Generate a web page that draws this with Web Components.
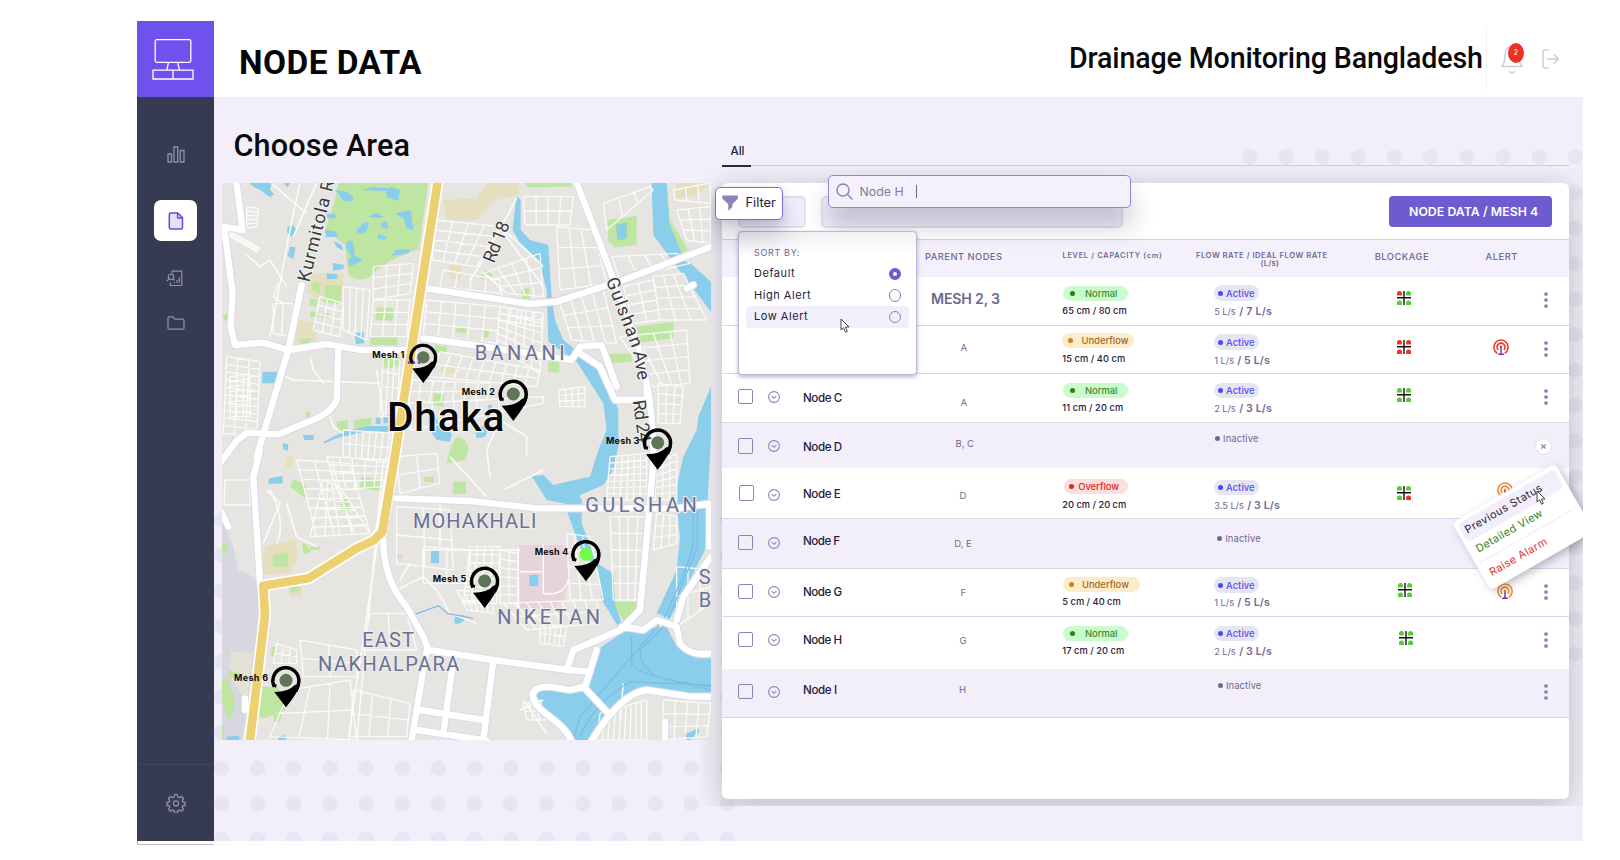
<!DOCTYPE html>
<html lang="en">
<head>
<meta charset="utf-8">
<title>Drainage Monitoring Bangladesh</title>
<style>
  html, body { margin: 0; padding: 0; background: #fff; }
  body { width: 1620px; height: 860px; overflow: hidden; font-family: Inter, "Liberation Sans", sans-serif; color: #25213b; }
</style>
</head>
<body>
<app-shell>
  <side-nav slot="nav"></side-nav>
  <top-bar slot="header" heading="NODE DATA" product="Drainage Monitoring Bangladesh"></top-bar>
  <area-map slot="map"></area-map>
  <node-panel slot="panel"></node-panel>
</app-shell>

<script>
const ctx = document.createElement('canvas').getContext('2d');

function define(name, render) {
  customElements.define(name, class extends HTMLElement {
    constructor() { super(); this.attachShadow({ mode: 'open' }); }
    connectedCallback() { this.shadowRoot.innerHTML = render(this); }
  });
}

/* One line of text tracked out to a given width. */
customElements.define('fit-text', class extends HTMLElement {
  constructor() {
    super();
    this.attachShadow({ mode: 'open' }).innerHTML =
      '<style>:host{display:block;white-space:pre}</style><slot></slot>';
  }
  connectedCallback() {
    const size = +this.getAttribute('s'), weight = this.getAttribute('wt') || 400;
    const family = this.getAttribute('f') || 'Inter', width = +this.getAttribute('w');
    const text = this.textContent;
    ctx.font = `${weight} ${size}px ${family}, "Liberation Sans"`;
    const natural = ctx.measureText(text).width;
    const st = this.style;
    st.fontFamily = `${family}, "Liberation Sans", sans-serif`;
    st.fontSize = size + 'px';
    st.fontWeight = weight;
    st.lineHeight = (this.getAttribute('h') || 14) + 'px';
    if (this.getAttribute('c')) st.color = this.getAttribute('c');
    if (width && text.length > 1) {
      st.letterSpacing = ((width + size * 0.1 - natural) / (text.length - 1)).toFixed(3) + 'px';
      st.width = Math.ceil(width + 4) + 'px';
    }
  }
});
const T = (text, s, w, c, wt = 400, h = 14, f = 'Inter') =>
  `<fit-text s="${s}" w="${w}" c="${c}" wt="${wt}" h="${h}" f="${f}">${text}</fit-text>`;

define('app-shell', () => `
<style>
  :host{display:grid;grid-template-columns:77px 1369px;grid-template-rows:76px 744px;padding:21px 0 0 137px;width:1446px;height:830px}
  .nav{grid-row:1 / 3}
  main{position:relative;background:#f2effa;display:grid;grid-template-columns:489px 847px;column-gap:11px;padding-left:8px;align-items:start;overflow:hidden}
  .dots{position:absolute;inset:0;width:1369px;height:744px}
  .map{position:relative;z-index:1}
  h2{margin:0;padding:32px 0 0 11.5px;height:54px;font-weight:500}
  .foot{grid-column:1 / 3;height:3px;border-bottom:1px solid #fafafd}
  .foot i{display:block;width:76px;height:3px;border-bottom:1px solid #b9bac6;border-left:1px solid #b9bac6;box-sizing:content-box}
</style>
<div class="nav"><slot name="nav"></slot></div>
<slot name="header"></slot>
<main>
  <svg class="dots" viewBox="214 97.3 1369 744">
    <defs><pattern id="d" patternUnits="userSpaceOnUse" x="203.4" y="502.3" width="36.15" height="35.5"><circle cx="18.07" cy="17.75" r="7.7" fill="#e7e4f4"/></pattern>
    <pattern id="e" patternUnits="userSpaceOnUse" x="1231.9" y="139.6" width="36.15" height="35.5"><circle cx="18.07" cy="17.75" r="7.7" fill="#e7e4f4"/></pattern></defs>
    <rect x="203.4" y="502.3" width="542.3" height="355" fill="url(#d)"/>
    <rect x="1231.9" y="139.6" width="361.5" height="532.5" fill="url(#e)"/>
  </svg>
  <div class="map"><h2>${T('Choose Area', 30.6, 173.5, '#0a0a0a', 500, 34, 'Roboto')}</h2><slot name="map"></slot></div>
  <slot name="panel"></slot>
</main>
<div class="foot"><i></i></div>`);

define('side-nav', () => `
<style>
  :host{display:flex;flex-direction:column;width:77px;height:820px;background:#373a53}
  .logo{height:76px;background:#6f52ed;display:flex;justify-content:center;padding-top:16.5px;box-sizing:border-box}
  nav{flex:1;display:flex;flex-direction:column;align-items:center}
  a{display:grid;place-items:center;width:43px;height:41px;border-radius:7px}
  a.on{background:#fff}
  .end{height:76px;border-top:1.5px solid #42455f;display:grid;place-items:center}
  svg{fill:none;display:block}
</style>
<div class="logo"><svg width="42" height="43" viewBox="0 0 42 43" stroke="#fff" stroke-width="1.3" style="margin-right:5px"><rect x="3.2" y="1.7" width="35.6" height="22.6" rx="1.5"/><path d="M16.5 24.3 14.8 32M25.5 24.3 27.5 32M1 32.2H41V41H1ZM21 32.2V41"/></svg></div>
<nav>
  <a style="margin-top:37px"><svg width="18" height="17" viewBox="0 0 18 17" stroke="#8e8fb5" stroke-width="1.3"><path d="M1 8h3.5v8H1ZM7 1h3.7v15H7ZM13.3 4.5H17V16h-3.7Z"/></svg></a>
  <a class="on" style="margin-top:25px"><svg width="16" height="18" viewBox="0 0 16 18" stroke="#7443e0" stroke-width="1.5" stroke-linejoin="round"><path fill="#e6e3f4" d="M2.8 1H9.8L14.5 5.8V15.5Q14.5 17 13 17H2.8Q1.3 17 1.3 15.5V2.5Q1.3 1 2.8 1Z"/><path d="M9.6 1V6H14.5"/></svg></a>
  <a style="margin-top:16.500px"><svg width="17" height="17" viewBox="0 0 17 17" stroke="#8e8fb5" stroke-width="1.2" style="margin-right:3px"><path d="M6 3V1.2H15.800V15.500H4.400V12.500M11 12.800V10M13.300 12.800V7.500M8.500 12.800V11.800"/><circle cx="5" cy="6.8" r="2.7"/><path d="M3 8.8 .8 11.2M7 9.5 9 10"/></svg></a>
  <a style="margin-top:4px"><svg width="18" height="14" viewBox="0 0 18 14" stroke="#8e8fb5" stroke-width="1.3" stroke-linejoin="round"><path d="M1 2Q1 .8 2.2 .8H6L7.8 3.2H15.8Q17 3.2 17 4.4V12Q17 13.2 15.8 13.2H2.2Q1 13.2 1 12Z"/></svg></a>
</nav>
<div class="end"><svg width="20" height="20" viewBox="0 0 24 24" stroke="#8e8fb5" stroke-width="1.6" stroke-linejoin="round"><circle cx="12" cy="12.500" r="3"/><path d="M10.3 2h3.4l.6 2.9 1.8.8 2.5-1.600 2.400 2.400L19.400 9l.8 1.800 2.800.600v3.300l-2.800.600-.800 1.800 1.600 2.500-2.400 2.400-2.500-1.600-1.800.800-.600 2.800h-3.400l-.600-2.800-1.800-.800-2.500 1.600L3 19.600l1.600-2.500-.800-1.800L1 14.700v-3.300l2.800-.600L4.600 9 3 6.500l2.400-2.400 2.500 1.600 1.800-.8Z"/></svg></div>`);

define('top-bar', el => `
<style>
  :host{display:flex;align-items:flex-start;height:76px;background:#fff}
  h1,p{margin:0}
  h1{padding:23px 0 0 25px;flex:0 0 190px}
  p{margin:17.500px 0 0 auto;width:417px}
  .rule{width:1px;height:62px;margin:6px 0 0 0;background:#f0f0f2}
  .bell{position:relative;margin:23.500px 0 0 14px;width:22px;height:29px}
  .badge{position:absolute;left:7px;top:-1.500px;width:16px;height:20px;border-radius:50%;background:#ee3024;color:#fff;text-align:center;font-size:7px;line-height:19px}
  .exit{margin:27.500px 24px 0 19px}
  svg{display:block;fill:none}
</style>
<h1>${T(el.getAttribute('heading'), 33.4, 179, '#060606', 700, 38, 'Roboto')}</h1>
<p>${T(el.getAttribute('product'), 28.6, 411, '#0a0a0a', 500, 38, 'Roboto')}</p>
<div class="rule"></div>
<div class="bell"><svg width="22" height="29" viewBox="0 0 22 29" stroke="#ced0d9" stroke-width="1.5" stroke-linecap="round" stroke-linejoin="round"><path d="M1 21.500H21C18 18 18.500 15 18 10C17.500 4 14.500 1.500 11 1.500S4.500 4 4 10C3.600 15 4 18 1 21.500ZM8.600 26.500q2.400 2.600 4.800 0"/></svg><span class="badge">2</span></div>
<div class="exit"><svg width="17" height="20" viewBox="0 0 17 20" stroke="#ced0d9" stroke-width="1.5" stroke-linecap="round" stroke-linejoin="round"><path d="M6 1H2.500Q1 1 1 2.500V17.500Q1 19 2.500 19H6M5.500 10H16M12 5.500 16.300 10 12 14.500"/></svg></div>`);

/* Street grid: straight lines interpolated between the four corners of a block. */
function grid(ax, ay, bx, by, cx, cy, dx, dy, n, m) {
  let d = '';
  for (let i = 0; i <= n; i++) { const t = i / n;
    d += `M${(ax + (bx - ax) * t).toFixed(0)} ${(ay + (by - ay) * t).toFixed(0)}L${(dx + (cx - dx) * t).toFixed(0)} ${(dy + (cy - dy) * t).toFixed(0)}`; }
  for (let i = 0; i <= m; i++) { const t = i / m;
    d += `M${(ax + (dx - ax) * t).toFixed(0)} ${(ay + (dy - ay) * t).toFixed(0)}L${(bx + (cx - bx) * t).toFixed(0)} ${(by + (cy - by) * t).toFixed(0)}`; }
  return d;
}
const streets = [
  [940,80,1090,80,1080,165,945,165,4,2],[1180,100,1320,50,1330,60,1190,180,3,1],
  [1040,170,1150,180,1190,340,1050,360,3,3],[1205,260,1400,250,1440,280,1230,330,4,1],
  [1390,60,1500,39,1503,100,1395,90,3,1],[1400,120,1503,110,1503,220,1430,210,3,3],
  [1330,320,1420,310,1490,450,1350,450,3,4],[1240,350,1330,330,1350,450,1270,460,2,4],
  [1050,400,1180,360,1220,520,1085,510,4,3],[1230,500,1430,480,1440,640,1330,650,4,4],
  [650,390,870,410,860,520,640,495,5,3],[870,410,1000,430,990,610,860,530,5,6],
  [870,410,1000,430,995,470,866,450,4,2],
  [690,545,990,600,980,650,660,620,9,2],[600,630,840,640,830,690,590,700,7,2],
  [680,150,870,170,800,290,665,270,4,4],[820,310,990,250,1000,380,890,370,4,3],
  [700,300,870,330,870,370,690,350,4,1],
  [490,290,610,280,600,370,490,390,3,3],[400,350,480,360,470,510,400,480,4,1],
  [490,390,600,390,590,500,480,500,3,3],[330,380,400,400,390,500,310,480,3,4],
  [190,400,250,400,240,500,190,490,2,1],
  [110,110,145,115,140,170,110,175,1,5],[55,180,150,235,140,245,60,200,2,3],
  [50,560,150,575,140,800,40,790,3,10],[60,620,120,610,120,740,60,740,3,8],
  [400,780,560,790,545,880,400,860,8,2],[520,560,570,570,560,740,510,740,3,4],
  [1045,660,1125,650,1125,710,1050,710,4,3],[600,700,1000,680,1000,700,600,780,6,1],
  [1200,860,1310,850,1310,990,1190,990,6,7],[1345,640,1420,650,1410,760,1345,760,3,4],
  [1340,880,1400,850,1400,990,1335,990,3,6],[1200,1040,1310,1040,1295,1290,1210,1290,4,5],
  [1340,1030,1400,1040,1400,1120,1330,1140,3,3],
  [350,860,540,870,520,950,380,960,5,4],[260,870,420,880,480,1090,320,1100,3,8],
  [340,930,390,950,480,1090,300,1100,4,6],[560,860,680,850,690,940,570,970,2,2],
  [560,1010,720,1020,730,1200,560,1180,2,2],[640,1130,780,1140,780,1240,640,1240,2,1],
  [780,1130,870,1130,860,1300,760,1300,4,7],[870,1140,925,1150,925,1300,870,1300,2,6],
  [740,1260,850,1270,850,1330,770,1320,5,2],[880,1300,1160,1290,1170,1360,950,1380,8,2],
  [990,1360,1070,1370,1060,1430,990,1420,5,2],[1070,1090,1140,1100,1180,1290,1080,1290,3,4],
  [1170,1630,1310,1590,1310,1710,1160,1710,9,1],[1360,1590,1503,1600,1490,1700,1360,1710,4,3],
  [200,1420,260,1440,260,1480,190,1480,3,2],[270,1410,440,1440,440,1520,280,1520,2,2],
  [480,1330,590,1330,620,1440,460,1440,2,1],[430,1560,600,1600,590,1700,420,1700,3,2],
  [1400,1190,1503,1200,1503,1300,1400,1370,3,2],[45,930,120,930,120,1005,42,1005,1,1],
  [240,1560,420,1530,440,1710,180,1700,3,2],[940,1600,990,1590,1010,1650,950,1650,3,2]
].map(a => grid(...a)).join('');

const roads = 'M78 30 98 180 36 170M42 170 68 370 62 470 75 525 160 518 235 540 350 522 450 540 600 540M275 345 235 540 140 860M385 540 380 690Q370 720 320 745L205 793 110 788 80 812 30 880M650 355 960 402 1040 395 1240 330 1503 230M640 505 790 525 1085 570 1110 530 1175 525 1220 650M1110 550 1170 590 1215 690H1310V640M1097 30 1200 300M1200 300 1285 530 1310 640Q1330 740 1330 880L1315 1050 1290 1320 1230 1380 1090 1440 1070 1500M150 840 130 920 150 1240M520 1110Q520 1230 590 1310L640 1400 655 1440 850 1470 1075 1500 1140 1505M650 1440 605 1710M730 1470 700 1690M850 1470 820 1710M630 1620 820 1650M620 1680 830 1712M560 985 780 993 980 1015 1400 1015 1503 1000M1503 1160 1420 1280 1400 1350M1235 1370 1300 1380 1340 1350 1400 1370 1410 1420Q1440 1460 1503 1450M1160 1440 1125 1550 1080 1560 1020 1550Q960 1550 970 1585C980 1630 1060 1650 1085 1715M1125 1555 1190 1625M1140 1720Q1230 1570 1310 1560L1440 1580H1510M1365 1655V1720M1498 1000V1130M1430 355 1450 345M36 1030 55 1070M105 1585V1620';

const pin = (x, y, r, label, lx, lw, fill = '#5e7656') => {
  const q = r / 44;
  return `<g transform="translate(${x} ${y}) scale(${q.toFixed(2)})"><path d="M-35 19A39 39 0 1 1 38 8Q36 20 29 33" fill="none" stroke="#000" stroke-width="10.500"/><path d="M-42 16 -28 11 -30 22Z" fill="#000"/><path d="M-35 35Q8 35 26 14L43 10Q36 36 0 81Z" fill="#000"/><circle r="19.500" fill="${fill}"/></g>
  <text x="${lx}" y="${y + 3}" class="m" textLength="${lw}">${label}</text>`;
};
const W = '#8bceec', G = '#bfe5a2';
define('area-map', () => `
<style>
  :host{display:block;width:489px;height:557px;overflow:hidden;background:#e6e5e1;margin-top:0}
  svg{display:block}
  text{font-family:Roboto,"Liberation Sans",sans-serif}
  .m{font-family:Inter,"Liberation Sans",sans-serif;font-weight:700;font-size:27px;fill:#0b0b0b}
  .a{fill:#6a7096;font-size:60px;stroke:#eeeeec;stroke-width:6px;paint-order:stroke}
  .r{fill:#3b3b3d;font-size:54px;stroke:#f3f3f1;stroke-width:6px;paint-order:stroke}
  .big{font-size:122px;font-weight:500;fill:#070707;stroke:#f6f6f2;stroke-width:7px;paint-order:stroke}
</style>
<svg width="489" height="557" viewBox="36 39 1467 1671" preserveAspectRatio="none">
  <g fill="#d6d7e0"><path d="M36 1040 70 1130 85 1200 150 1230 140 1440 95 1710H36Z"/></g>
  <path d="M62 1445 130 1450 110 1600 60 1520Z" fill="#e4e1d6"/>
  <g fill="#e5dfbf"><path d="M700 90 800 85 830 39H930L925 75 860 90 800 150H708ZM300 310H400V400H350L290 370ZM265 450 318 460V520H255ZM720 285 755 290 750 330 718 322ZM1395 39H1503L1460 75 1400 85ZM165 1130 260 1105 262 1170 240 1210 155 1215ZM230 860H250V890H228ZM235 1250H275V1278H240ZM695 590H733V610H693Z"/></g>
  <g fill="${G}"><path d="M385 39H655L627 238Q520 270 475 325Q440 335 415 315L405 225 345 180 372 100ZM345 345 395 345 390 402 342 397ZM310 335 333 340 328 372 305 362ZM300 385 323 388 318 412 297 405ZM300 425 328 425 325 442 300 442ZM335 430H358V444H335ZM270 508 303 505 300 525 268 525ZM500 412 551 414 547 452 497 450ZM483 498H563V525H480ZM515 565 570 560 568 585 540 595 516 590ZM945 39H1085V50L950 52ZM1193 150 1280 138V225L1215 232 1195 215ZM1370 39 1380 150 1435 240 1410 250 1370 170ZM1280 470 1390 455V505L1290 518ZM1195 553 1270 548 1265 575 1200 580ZM1015 575H1048V608L1013 605ZM935 360 957 352 960 388 936 386ZM830 300 848 315 835 330 808 325ZM740 468 770 472V490L738 486ZM817 478 837 482 835 503 816 500ZM675 525 712 530 710 548H670ZM670 670 703 673 700 710 668 705ZM380 755 415 750 413 785H385ZM432 750 485 743V765L432 775ZM36 440 55 428 55 462ZM288 725H300V742H288ZM740 800Q775 805 775 840L765 870 710 880 722 830ZM455 920 516 930 512 963 448 955ZM395 982 420 985 418 1023H391ZM250 927 288 945 285 985 240 950ZM730 935H768V972H728ZM643 920 672 922V935H643ZM190 1155 235 1145V1190H187ZM275 1120 290 1122 300 1140H330V1130H300V1150L280 1150ZM1207 1295H1280L1270 1340 1245 1360ZM36 1120H52V1150H36ZM57 1500 90 1510 88 1525 55 1520ZM36 1530 55 1525 76 1600 60 1655 36 1600ZM150 1550 205 1550 210 1570 225 1620 170 1643H140ZM190 1635 215 1630 210 1655 193 1655ZM185 1430H198V1460H183ZM240 1250 270 1250V1265H240ZM36 1665H42V1710H36Z"/></g>
  <g fill="${W}"><path d="M118 39H185L180 60 192 72 180 82 150 60 130 50ZM222 39H240L232 53ZM232 170 248 165 260 180 245 200 232 190ZM240 230 257 232 250 267 233 258ZM350 130 375 132 378 145H352ZM345 180 375 183 385 200 348 202ZM372 213 395 225 400 242 378 230ZM368 278 402 285 400 298 370 302ZM350 310 382 314V326L350 328ZM375 60 410 65 432 80 425 95 400 92ZM450 60 490 52 535 55 525 63ZM527 60 545 50 570 60 565 92 530 82ZM475 140 500 128 522 140 500 145ZM555 130 602 120 610 180 590 175 580 145ZM440 180 465 155 478 160 465 190 440 192ZM512 160 530 153 535 178 515 172ZM505 190 530 200 525 210 502 205ZM410 215 428 212 435 258 460 270 418 290 415 270 425 260 408 235ZM555 240 600 238 595 250 545 258ZM433 490 460 487 463 520 438 523ZM158 605H202V640H156ZM278 795 312 795 310 810H283ZM218 820 235 822 233 842 220 838ZM497 743H512V762H497ZM520 738 535 735 533 760H520ZM340 815 400 785 470 768H535V785L460 785 380 805 345 820ZM655 740 680 745 690 775 725 790 720 815 680 810 655 775ZM795 780 830 760 835 705 845 705 840 760 825 800 800 805Z"/>
    <path d="M922 80 932 90V180L960 210 1015 225 1025 380 1035 450 1060 510 1105 545 1180 590 1225 720 1225 830 1210 900 1180 945 1110 975 1110 1000 1060 1000 1010 990 965 918 1000 915 1030 945 1070 935 1140 920 1165 840 1190 780 1180 700 1100 575 1015 515 1010 360 985 270 930 220 908 180 918 90Z"/>
    <path d="M1325 39H1370L1378 160 1420 260 1503 335V425L1400 290 1330 195Z"/>
    <path d="M1503 650 1465 740 1460 780 1420 860 1400 950 1405 1060 1410 1100 1400 1200 1340 1330 1380 1345 1420 1270 1485 1140 1490 1050 1503 800Z"/>
    <path d="M1060 985H1115V1060L1160 1180 1210 1210 1215 1300 1235 1360 1225 1370 1175 1290 1165 1210 1110 1130 1075 1035Z"/>
    <path d="M1370 1370 1400 1430 1460 1465H1503V1575L1300 1560 1240 1590 1140 1710H1080L1075 1690 985 1610 980 1560 1060 1560 1135 1550 1160 1440 1250 1380Z"/>
    <path d="M178 925 218 918V940L175 942ZM663 1142H687V1180H663ZM735 1340 760 1335 765 1350 745 1362 733 1360ZM50 1700 88 1697V1710H50ZM205 1700 225 1695 230 1710H205ZM1420 1695 1465 1675 1468 1685 1435 1715Z"/></g>
  <path d="M1218 165 1250 158V205L1224 210Z" fill="${W}" stroke="#9fd6a0" stroke-width="3"/>
  <path d="M925 1125H1055L1080 1150 1075 1240 1060 1295 1030 1315H930ZM560 1153H578V1168H560Z" fill="#e7d3db"/>
  <path d="M958 1215H985V1248H958Z" fill="${W}"/>
  <g fill="none" stroke="#fcfcfa" stroke-width="4.500" stroke-linejoin="round"><path stroke-width="4.200" opacity=".9" d="${streets}"/>
    <path d="M270 39 240 180 180 500M320 39 250 200M185 40 290 130M105 250 150 290 180 270 230 350M205 340 190 380 220 400M920 85 820 270 780 330M880 180Q930 220 1000 290M860 160 1000 350M820 310Q880 340 880 400M300 560 310 600 340 640M202 610 250 630 510 640M360 740 370 770 400 790M500 600 520 740M520 870 440 1710M505 1100 415 1710M170 960 210 1000 160 1120M230 1000 260 1100 320 1130M200 1120Q230 1060 180 960M640 1200V1140H930M600 1180 570 1230M560 1260 640 1220 680 1260 720 1330 800 1360M1000 1120V1270Q1060 1280 1075 1230M930 1205H1000M925 1130V1320M880 960 1000 900M690 1000V1130M840 920 830 840 870 750 950 800V860M1240 1540 1230 1650M940 1590 1010 1690M930 1620 1000 1590M720 860 830 980"/></g>
  <g fill="none" stroke="#7ab9e6" stroke-width="3.500"><path d="M615 1333 685 1307 712 1330 790 1345M1450 1020V1120Q1440 1180 1360 1350L1110 1640 1090 1710M1462 1020V1130L1370 1360 1290 1440Q1290 1490 1340 1520L1503 1560M1265 1400V1480Q1280 1520 1503 1550M1110 1700Q1150 1600 1260 1535L1503 1545"/></g>
  <g fill="none" stroke-linejoin="round" stroke-linecap="round">
    <path stroke="#d9daea" stroke-width="25" d="${roads}"/>
    <path stroke="#fff" stroke-width="19" d="${roads}"/>
    <path stroke="#fff" stroke-width="36" d="M684 30 556 850 513 1085 490 1112 440 1135 295 1225 160 1247 165 1335 120 1710V1720"/>
    <path stroke="#edd170" stroke-width="26" d="M684 30 556 850 517 1085 490 1112 440 1135 295 1225 160 1247 165 1335 120 1710V1720"/>
  </g>
  <text class="r" transform="translate(298 338) rotate(-76)" textLength="312">Kurmitola R</text>
  <text class="r" transform="translate(852 282) rotate(-68)" textLength="128">Rd 18</text>
  <text class="r" transform="translate(1187 330) rotate(69)" textLength="220">Gulshan</text>
  <text class="r" transform="translate(1270 545) rotate(81)" textLength="88">Ave</text>
  <text class="r" transform="translate(1268 692) rotate(82)" textLength="128">Rd 24</text>
  <text class="a" x="794" y="570" textLength="270">BANANI</text>
  <text class="a" x="609" y="1074" textLength="370">MOHAKHALI</text>
  <text class="a" x="1126" y="1025" textLength="334">GULSHAN</text><text class="a" x="1497" y="1025">1</text>
  <text class="a" x="862" y="1363" textLength="308">NIKETAN</text>
  <text class="a" x="457" y="1431" textLength="155">EAST</text>
  <text class="a" x="324" y="1502" textLength="424">NAKHALPARA</text>
  <text class="a" x="1466" y="1242">S</text><text class="a" x="1466" y="1312">B</text>
  <text class="big" x="531" y="782" textLength="352">Dhaka</text>
  ${pin(640, 562, 42, 'Mesh 1', 487, 96)}
  ${pin(910, 672, 44, 'Mesh 2', 755, 100)}
  ${pin(1343, 818, 44, 'Mesh 3', 1188, 100)}
  ${pin(1128, 1153, 44, 'Mesh 4', 974, 101, '#74fb4a')}
  ${pin(824, 1233, 44, 'Mesh 5', 668, 101)}
  ${pin(228, 1531, 44, 'Mesh 6', 72, 102)}
  <g fill="#7a3df0"><circle cx="597" cy="578" r="4"/><circle cx="612" cy="578" r="4"/><circle cx="627" cy="578" r="4"/></g>
</svg>`);

/* ---------- small building blocks ---------- */
define('status-pill', el => {
  const kind = el.getAttribute('kind');
  const [bg, dot, fg] = { Normal: ['#cbfccb', '#2f7d1e', '#3a8a2c'], Underflow: ['#fdecc8', '#cd8024', '#a3662a'],
    Overflow: ['#fbdfe0', '#dc2a20', '#dc2a20'], Active: ['#e6e5f1', '#4a49f5', '#4f4ef2'], Inactive: ['transparent', '#6e6893', '#6e6893'] }[kind];
  const dx = +el.getAttribute('dx'), tx = +el.getAttribute('tx');
  return `<style>:host{display:flex;align-items:center;width:${el.getAttribute('w')}px;height:15.5px;border-radius:8px;background:${bg}}
  i{width:5px;height:5px;border-radius:50%;background:${dot};margin-left:${dx - 2.5}px;margin-right:${tx - dx - 3}px;flex:none}</style>
  <i></i>${T(kind, 9.4, el.getAttribute('tw'), fg, kind === 'Inactive' ? 400 : 500, 15)}`;
});
define('flow-value', el => {
  const now = el.getAttribute('now');
  return `<style>:host{display:flex;color:#6e6893}</style>${T(now, 9.3, el.getAttribute('nw') - 1, '#6e6893')}${T('/ ' + el.getAttribute('ideal'), 10.6, 31.5, '#6e6893', 600)}`;
});
define('block-icon', el => {
  const c = el.getAttribute('cells').split('').map(k => k === 'r' ? '#f0322a' : '#5bcb3c');
  const p = (x, y, f) => `<path transform="translate(${x} ${y})" fill="${f}" d="M0 4.400V1.500Q0 .8 .8 .8L1.500 0H3.400L4.100 .8Q4.900 .8 4.900 1.500V4.400Z"/>`;
  return `<style>:host,svg{display:block}</style><svg width="14" height="14" viewBox="0 0 14 14">${p(0, .1, c[0])}${p(9.1, .1, c[1])}${p(0, 9.500, c[2])}${p(9.1, 9.500, c[3])}<path d="M7 0V14M0 6.700H14" stroke="#111" stroke-width="1.400"/></svg>`;
});
define('alert-icon', el => `<style>:host,svg{display:block}</style><svg width="16" height="16" viewBox="0 0 16 16" fill="none" stroke="${el.getAttribute('tone')}" stroke-width="1.600"><path d="M4.300 14.200A7.100 7.100 0 1 1 11.700 14.200"/><path d="M5.200 11A4 4 0 1 1 10.800 11"/><circle cx="8" cy="7.800" r="1" fill="${el.getAttribute('tone')}" stroke-width=".8"/><path d="M8 8.600V15M5.200 15.200H10.800" stroke="#6b2fa0" stroke-width="1.400"/></svg>`);
define('row-menu', () => `<style>:host,svg{display:block}</style><svg width="4" height="16" viewBox="0 0 4 16" fill="#857cb8"><circle cx="2" cy="2" r="1.850"/><circle cx="2" cy="8" r="1.850"/><circle cx="2" cy="14" r="1.850"/></svg>`);
define('check-box', () => `<style>:host{display:block;box-sizing:border-box;width:15.500px;height:15.500px;border:1.300px solid #8b83ba;border-radius:2px}</style>`);
define('expand-toggle', () => `<style>:host,svg{display:block}</style><svg width="12" height="12" viewBox="0 0 12 12" fill="none" stroke="#8b83ba" stroke-width="1.100"><circle cx="6" cy="6" r="5.400"/><path d="M3.700 5.100 6 7.300 8.300 5.100"/></svg>`);
define('close-dot', () => `<style>:host,svg{display:block}</style><svg width="17" height="17" viewBox="0 0 17 17" fill="none"><circle cx="8.500" cy="8.500" r="7.900" fill="#fff" stroke="#dcd9ea" stroke-width=".8"/><path d="M6.300 6.300 10.700 10.700M10.700 6.300 6.300 10.700" stroke="#7d75ab" stroke-width="1.200"/></svg>`);
define('mouse-cursor', () => `<style>:host,svg{display:block}</style><svg width="11" height="16" viewBox="0 0 11 16"><path d="M1 1V12L3.600 9.700 5.400 14.200 7.300 13.400 5.500 9H9Z" fill="#fff" stroke="#3a3a44" stroke-width=".95" stroke-linejoin="round"/></svg>`);

/* ---------- table ---------- */
const COLS = [722, 762, 803, 903, 1062, 1214, 1374, 1475, 1530, 1569];
/* each item: [x, centre y, height, markup] */
const cells = (top, items) => {
  const out = COLS.slice(0, -1).map(() => []);
  for (const it of items) { let c = 0; while (c < 8 && it[0] >= COLS[c + 1]) c++; out[c].push(it); }
  return out.map((list, c) => {
    let y = top;
    return '<div>' + list.map(([x, cy, h, html]) => {
      const mt = cy - h / 2 - y; y = cy + h / 2;
      return `<div style="margin:${mt.toFixed(1)}px 0 0 ${(x - COLS[c]).toFixed(1)}px;height:${h}px">${html}</div>`;
    }).join('') + '</div>';
  }).join('');
};
const P = '#6e6893', K = '#25213b';
const cb = (y, x = 737.6) => [x, y, 15.5, '<check-box></check-box>'];
const ex = y => [768.300, y, 12, '<expand-toggle></expand-toggle>'];
const name = (t, y, w) => [803, y, 14, T(t, 11.6, w, K, 500)];
const par = (t, x, y, w) => [x, y, 14, T(t, 9.5, w, P)];
const lvl = (k, y, x, w, dx, tx, tw) => [x, y, 15.5, `<status-pill kind="${k}" w="${w}" dx="${dx - x}" tx="${tx - x}" tw="${tw}"></status-pill>`];
const normal = y => lvl('Normal', y, 1062.600, 65.500, 1072.300, 1085.500, 31.500);
const cap = (t, y, w) => [1062.300, y, 14, T(t, 9.3, w, K, 500)];
const act = y => lvl('Active', y, 1214, 44.500, 1220.300, 1226.500, 27.700);
const inact = (y, dx, tx) => [1214, y, 15.5, `<status-pill kind="Inactive" w="60" dx="${dx - 1214}" tx="${tx - 1214}" tw="34.5"></status-pill>`];
const flow = (a, b, y, nw) => [1214.200, y, 14, `<flow-value now="${a}" ideal="${b}" nw="${nw}"></flow-value>`];
const blk = (c, x, y) => [x - 7, y, 14, `<block-icon cells="${c}"></block-icon>`];
const alr = (c, x, y) => [x - 8, y, 16, `<alert-icon tone="${c}"></alert-icon>`];
const more = y => [1543.700, y, 16, '<row-menu></row-menu>'];
const ROWS = [
  [277, 326, '', [[931, 299.3, 18, T('MESH 2, 3', 14.2, 68, P, 600, 18)], normal(293.5), cap('65 cm / 80 cm', 311, 63.500), act(293.2), flow('5 L/s', '7 L/s', 312, 21.500), blk('rggg', 1404.3, 298), more(299.5)]],
  [326, 374, '', [par('A', 960.500, 347.7, 6), lvl('Underflow', 340.5, 1062, 72, 1070.700, 1082, 46), cap('15 cm / 40 cm', 359.3, 62), act(342), flow('1 L/s', '5 L/s', 360.7, 20), blk('rrrr', 1404.3, 347), alr('#ee3a2c', 1501, 347), more(348.7)]],
  [374, 423, '', [cb(396.5), ex(397), name('Node C', 398, 38), par('A', 960.500, 402.5, 6), normal(390.3), cap('11 cm / 20 cm', 408, 60), act(390.3), flow('2 L/s', '3 L/s', 409.3, 21.500), blk('gggg', 1404.3, 395), more(396.5)]],
  [423, 468, 't n', [cb(446), ex(446.3), name('Node D', 447.2, 38), par('B, C', 955.500, 444.2, 17.500), inact(438.2, 1217.300, 1223.500), [1535, 446, 17, '<close-dot></close-dot>']]],
  [468, 519, '', [cb(493, 738.6), ex(494.6), name('Node E', 494.4, 36.500), par('D', 959.500, 495.6, 6), lvl('Overflow', 486.5, 1064, 64, 1071.300, 1078.700, 40), cap('20 cm / 20 cm', 505, 63), act(487.7), flow('3.5 L/s', '3 L/s', 506.3, 29.700), blk('gggr', 1404.3, 493), alr('#f08a33', 1505, 490)]],
  [519, 569, 't', [cb(542.3), ex(542.6), name('Node F', 541.2, 36), par('D, E', 954.300, 543.7, 16.500), inact(538.5, 1219.600, 1225.700)]],
  [569, 617, '', [cb(591.6), ex(591.9), name('Node G', 591.8, 38), par('F', 960.500, 592.8, 5), lvl('Underflow', 584.6, 1062.600, 77.500, 1071.300, 1082.500, 46), cap('5 cm / 40 cm', 602.3, 57.500), act(585), flow('1 L/s', '5 L/s', 603.4, 20), blk('gggg', 1405, 590), alr('#f08a33', 1505, 591), more(591.5)]],
  [617, 669, 'n', [cb(639.4), ex(639.7), name('Node H', 639.6, 38), par('G', 959.500, 641.4, 6), normal(633.3), cap('17 cm / 20 cm', 651, 61), act(633.2), flow('2 L/s', '3 L/s', 651.9, 21.500), blk('gggg', 1405.7, 638), more(639.5)]],
  [669, 718, 't', [cb(691.4), ex(691.9), name('Node I', 689.6, 33), par('H', 959, 689.6, 6), inact(685.3, 1220.300, 1226.400), more(691.7)]]
];
const flowHead = `<div style="margin-left:-18px;white-space:nowrap">${T('FLOW RATE / IDEAL FLOW RATE', 7.7, 130.5, P, 600, 8.6)}</div><div style="margin-left:46.5px">${T('(L/s)', 7.7, 17.5, P, 600, 8.6)}</div>`;
define('node-table', () => `
<style>
  :host{display:block}
  .row{display:grid;grid-template-columns:${COLS.slice(1).map((c, i) => c - COLS[i] + 'px').join(' ')};box-sizing:border-box;border-bottom:1px solid #d9d5ec;overflow:hidden}
  .row.t{background:#f2effa}
  .row.n{border-bottom:0}
  .head{height:38px;background:#f4f1fd;border-top:1px solid #d3cfe8;border-bottom:0}
  .row > div{min-width:0}
</style>
<div class="row head">${cells(240, [
  [925, 257.3, 12, T('PARENT NODES', 9.3, 76, P, 500, 12)],
  [1062.500, 256.2, 12, T('LEVEL / CAPACITY (cm)', 7.3, 98.500, P, 600, 12)],
  [1214, 260.3, 17.2, flowHead],
  [1374.700, 257.4, 12, T('BLOCKAGE', 9.3, 53, P, 500, 12)],
  [1485.500, 257.4, 12, T('ALERT', 9.3, 31, P, 500, 12)]
])}</div>
${ROWS.map(([a, b, c, items]) => `<div class="row ${c}" style="height:${b - a}px">${cells(a, items)}</div>`).join('')}`);

define('filter-button', () => `
<style>:host{display:flex;align-items:center;box-sizing:border-box;width:68.500px;height:33px;background:#fff;border:1.500px solid #7c6cd6;border-radius:5px;padding-left:6px;gap:7.500px;box-shadow:0 16px 24px rgba(40,30,80,.22),0 3px 8px rgba(60,50,120,.15)}svg{display:block}</style>
<svg width="16.500" height="16" viewBox="0 0 16.500 16" fill="#8b83ba"><path d="M.3 .5H16.200V3.400L10.300 9.300V12L6.300 15.800V9.300L.3 3.400Z"/></svg>${T('Filter', 12.8, 29, K, 400, 18)}`);

define('search-field', () => `
<style>:host{display:flex;align-items:center;box-sizing:border-box;width:303px;height:33px;background:#f4f1fd;border:1.500px solid #9085dd;border-radius:5px;padding-left:6.500px;box-shadow:0 18px 24px rgba(40,35,70,.24)}svg{display:block;margin-right:7px;fill:none}i{width:1px;height:12.500px;background:#6e6893;margin-left:9px}</style>
<svg width="17" height="17" viewBox="0 0 17 17" stroke="#8b83ba" stroke-width="1.400" stroke-linecap="round"><circle cx="7" cy="7" r="6"/><path d="M11.300 11.300 16 16"/></svg>${T('Node H', 12.3, 43, '#827c9f', 400, 18)}<i></i>`);

define('sort-menu', () => {
  const opt = (t, w, cls) => `<div class="o ${cls}">${T(t, 11, w, K, 400, 21.5)}<i></i></div>`;
  return `<style>
  :host{display:block;position:relative;box-sizing:border-box;width:179px;height:144px;background:#fff;border:1px solid #bdb7dd;border-radius:4px;box-shadow:0 2px 4px rgba(50,40,80,.35);padding:14px 7px 0}
  :host::before{content:"";position:absolute;left:0;top:0;right:0;height:24px;background:linear-gradient(rgba(60,50,90,.07),rgba(60,50,90,0))}
  .t{padding-left:8px}
  .o{display:flex;justify-content:space-between;align-items:center;height:21.400px;border-radius:4px;padding:0 8px 0 8px}
  .h{background:#f2effa}
  i{box-sizing:border-box;width:12.500px;height:12.500px;border:1.300px solid #8b83ba;border-radius:50%}
  .on i{border:4px solid #6d5bd0}
  mouse-cursor{position:absolute;left:100.500px;top:85.500px}
  </style><div class="t">${T('SORT BY:', 8.9, 44.500, P, 400, 14)}</div><div style="height:3.500px"></div>${opt('Default', 39.500, 'on')}${opt('High Alert', 55.500, '')}${opt('Low Alert', 52.500, 'h')}<mouse-cursor></mouse-cursor>`;
});

define('context-menu', () => `
<style>
  :host{display:block;box-sizing:border-box;width:119px;height:78px;background:#fff;border-radius:5px;padding:4px;box-shadow:2px 4px 9px rgba(40,35,60,.3);transform:rotate(-30deg);transform-origin:0 0}
  .p{background:#f2effa;border-radius:3px;height:20.500px;padding-left:4px}
  .d{height:23.500px;padding-left:4px;border-bottom:1px solid #eeecf7}
  .r{padding:2.500px 0 0 4px}
</style>
<div class="p">${T('Previous Status', 10.8, 86, K, 400, 20)}</div><div class="d">${T('Detailed View', 10.8, 74, '#2f8420', 400, 21)}</div><div class="r">${T('Raise Alarm', 10.8, 63.500, '#e03127', 400, 22)}</div>`);

define('node-panel', () => `
<style>
  :host{display:block;padding-top:47px;width:847px}
  .tabs{height:21px;border-bottom:1px solid #cfcbe3;display:flex}
  .tab{width:20px;padding-left:8.500px;height:20.500px;border-bottom:2px solid #2c2744}
  .card{position:relative;margin-top:17px;height:616px;background:#fff;border-radius:6px;box-shadow:0 6px 30px rgba(30,28,20,.25);clip-path:inset(-17px -14px -7px -22px)}
  .tools{display:flex;height:56px;padding:12.500px 17px 0 16px;box-sizing:border-box}
  .ghost{box-sizing:border-box;height:32.500px;border:2px solid #e3e0ee;border-radius:5px;background:#f2effc}
  .cta{box-sizing:border-box;margin-left:auto;width:163px;height:31.500px;border-radius:4px;background:#6d5bd0;padding:0 0 0 20px}
  filter-button,search-field,sort-menu,context-menu,.cur{position:absolute}
</style>
<div class="tabs"><div class="tab">${T('All', 11.5, 12.800, K, 500, 14)}</div></div>
<div class="card">
  <div class="tools"><div class="ghost" style="width:68px"></div><div class="ghost" style="width:302px;margin-left:15px"></div><div class="cta">${T('NODE DATA / MESH 4', 12.3, 128, '#fff', 600, 32)}</div></div>
  <node-table></node-table>
  <search-field style="left:106px;top:-8px"></search-field>
  <sort-menu style="left:16px;top:48px;position:absolute"></sort-menu>
  <filter-button style="left:-7.500px;top:3.500px"></filter-button>
  <context-menu style="left:730px;top:339.500px"></context-menu>
  <mouse-cursor class="cur" style="left:814px;top:307px"></mouse-cursor>
</div>`);
</script>
</body>
</html>
